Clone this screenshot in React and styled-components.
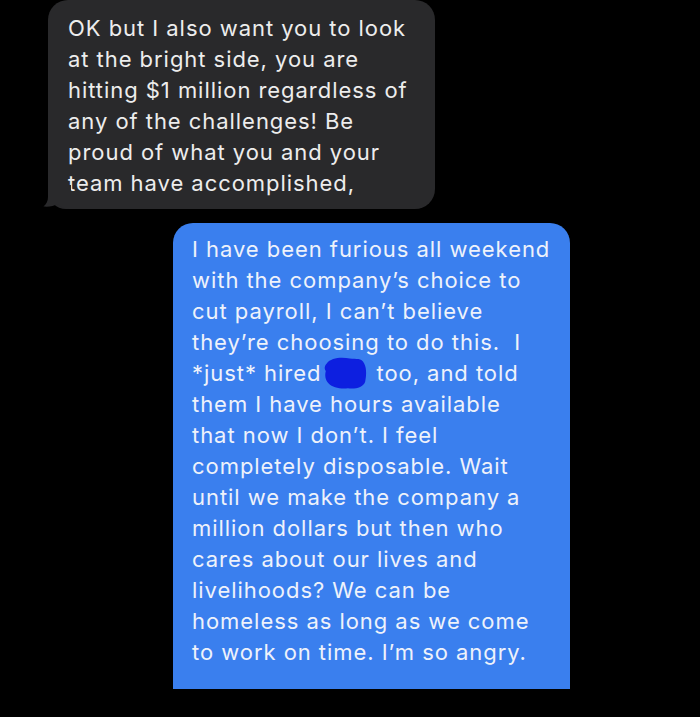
import React from 'react';
import styled, { createGlobalStyle } from 'styled-components';

const GlobalStyle = createGlobalStyle`
  html, body {
    margin: 0;
    padding: 0;
    background: #000;
  }

  body {
    font-family: Inter, "Liberation Sans", Arial, sans-serif;
  }
`;

const Screen = styled.div`
  width: 700px;
  height: 717px;
  overflow: hidden;
  background: #000;
  display: flex;
  flex-direction: column;
`;

const Bubble = styled.div`
  position: relative;
  box-sizing: border-box;
  width: ${(props) => props.width}px;
  margin-left: ${(props) => props.offset}px;
  margin-top: ${(props) => props.top}px;
  padding: ${(props) => props.pad};
  border-radius: ${(props) => (props.outgoing ? '20px 20px 0 0' : '20px 20px 20px 18px')};
  background: ${(props) => (props.outgoing ? '#3a7fee' : '#29292b')};
  color: ${(props) => (props.outgoing ? '#eef2fb' : '#ededed')};
  font-size: 22px;
  line-height: 31px;
  letter-spacing: 0.95px;
`;

const Line = styled.span`
  display: block;
  white-space: nowrap;
`;

const Tail = styled.svg`
  position: absolute;
  left: -5px;
  bottom: 0;
  width: 28px;
  height: 24px;
`;

const Scribble = styled.svg`
  display: inline-block;
  vertical-align: middle;
  width: 48px;
  height: 36px;
  margin: -8px 0 -4px 0;
`;

const grayLines = [
  'OK but I also want you to look',
  'at the bright side, you are',
  'hitting $1 million regardless of',
  'any of the challenges! Be',
  'proud of what you and your',
  'team have accomplished,',
];

function Blot() {
  return (
    <Scribble viewBox="0 0 50 36">
      <path
        d="M6 8 C10 2 22 1 30 3 C37 4 42 2 45 8 C48 14 47 22 46 27 C44 33 36 35 28 34 C20 35 12 33 8 29 C4 25 4 20 5 16 C3 13 4 10 6 8 Z"
        fill="#0d1fe0"
      />
    </Scribble>
  );
}

function App() {
  return (
    <>
      <GlobalStyle />
      <Screen>
        <Bubble width={387} offset={48} top={0} pad="13px 10px 10px 20px">
          {grayLines.map((line) => (
            <Line key={line}>{line}</Line>
          ))}
          <Tail viewBox="0 0 28 24">
            <path
              d="M5 0 L5 12 C5 16 3.5 19 0.5 21.5 C6 22 11 21 15 19 C18 22.5 22 24 28 24 L28 0 Z"
              fill="#29292b"
            />
          </Tail>
        </Bubble>
        <Bubble width={397} offset={173} top={14} pad="11px 10px 21px 19px" outgoing>
          <Line>I have been furious all weekend</Line>
          <Line>with the company’s choice to</Line>
          <Line>cut payroll, I can’t believe</Line>
          <Line>they’re choosing to do this.&nbsp; I</Line>
          <Line>
            *just* hired
            <Blot />
            {' '}too, and told
          </Line>
          <Line>them I have hours available</Line>
          <Line>that now I don’t. I feel</Line>
          <Line>completely disposable. Wait</Line>
          <Line>until we make the company a</Line>
          <Line>million dollars but then who</Line>
          <Line>cares about our lives and</Line>
          <Line>livelihoods? We can be</Line>
          <Line>homeless as long as we come</Line>
          <Line>to work on time. I’m so angry.</Line>
        </Bubble>
      </Screen>
    </>
  );
}

export default App;
